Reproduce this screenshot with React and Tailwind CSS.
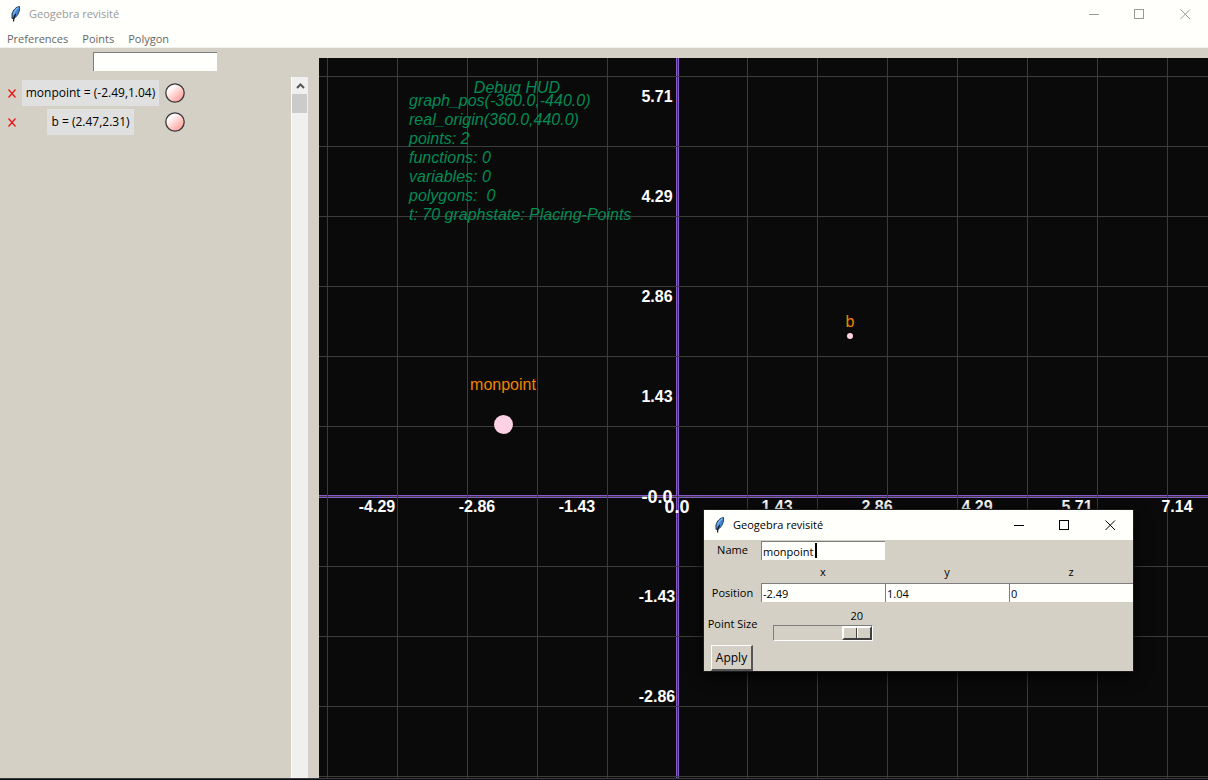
import React, { useState } from "react";

const GRID = 70;
const UNIT = 100;
const ORIGIN = { x: 358, y: 438 };
const range = (n) => Array.from({ length: n }, (_, i) => i);

const xLabels = [
  [-3, "-4.29"], [-2, "-2.86"], [-1, "-1.43"], [1, "1.43"],
  [2, "2.86"], [3, "4.29"], [4, "5.71"], [5, "7.14"],
];
const yLabels = [
  [4, "5.71"], [3, "4.29"], [2, "2.86"], [1, "1.43"], [-1, "-1.43"], [-2, "-2.86"],
];
const hud = [
  "graph_pos(-360.0,-440.0)",
  "real_origin(360.0,440.0)",
  "points: 2",
  "functions: 0",
  "variables: 0",
  "polygons:\u00a0 0",
  "t: 70 graphstate: Placing-Points",
];
const objects = ["monpoint = (-2.49,1.04)", "b = (2.47,2.31)"];

function Feather() {
  return (
    <svg width="16" height="16" viewBox="0 0 16 16" aria-hidden="true">
      <path d="M11.5 .5 C8 1 5 4 4 8 L4 12.500 L6.500 12 C10 9.500 12 5 11.500 .5Z" fill="#3f86d6" stroke="#24364f" strokeWidth="1" />
      <path d="M10.500 1.500 C8 3 6 6 5.500 9" fill="none" stroke="#7db8ef" strokeWidth="1.4" />
      <path d="M7.500 8 C6.200 10.500 5.500 13 5.500 15.500" fill="none" stroke="#111" strokeWidth="1.2" />
    </svg>
  );
}

function WindowButtons({ tone }) {
  return (
    <div className={`flex ${tone}`}>
      <button type="button" aria-label="Minimize" className="flex h-7 w-[46px] items-center justify-center">
        <svg width="11" height="11" shapeRendering="crispEdges"><path d="M0 5.5H10" stroke="currentColor" /></svg>
      </button>
      <button type="button" aria-label="Maximize" className="flex h-7 w-[45px] items-center justify-center">
        <svg width="11" height="11"><rect x=".5" y=".5" width="9" height="9" fill="none" stroke="currentColor" /></svg>
      </button>
      <button type="button" aria-label="Close" className="flex h-7 w-[46px] items-center justify-center">
        <svg width="11" height="11"><path d="M.5 .5L10 10M10 .5L.5 10" stroke="currentColor" /></svg>
      </button>
    </div>
  );
}

function Graph() {
  return (
    <svg className="absolute inset-0 h-full w-full font-['Liberation_Sans',Arial,sans-serif]" fontSize="16">
      <g fill="#8659c9" shapeRendering="crispEdges">
        <rect x={ORIGIN.x - 1} y="0" width="3" height="100%" />
        <rect x="0" y={ORIGIN.y - 1} width="100%" height="3" />
      </g>
      <g fill="#3c3c3c" shapeRendering="crispEdges">
        {range(40).map((i) => <rect key={i} x={8 + i * GRID} y="0" width="1" height="100%" />)}
        {range(30).map((i) => <rect key={i} x="0" y={18 + i * GRID} width="100%" height="1" />)}
      </g>
      <g fill="#fff" fontWeight="bold" textAnchor="middle">
        {xLabels.map(([n, t]) => <text key={t} x={ORIGIN.x + n * UNIT} y={ORIGIN.y + 16}>{t}</text>)}
        {yLabels.map(([n, t]) => <text key={t} x={ORIGIN.x - 20} y={ORIGIN.y - n * UNIT + 6}>{t}</text>)}
        <text x={ORIGIN.x - 20} y={ORIGIN.y + 7} fontSize="18">-0.0</text>
        <text x={ORIGIN.x} y={ORIGIN.y + 17} fontSize="18">0.0</text>
      </g>
      <g fill="#008c56" fontStyle="italic">
        <text x="198" y="35" textAnchor="middle">Debug HUD</text>
        {hud.map((t, i) => <text key={t} x="90" y={48 + i * 19}>{t}</text>)}
      </g>
      <g fill="#f08400" textAnchor="middle">
        <text x="184" y="332">monpoint</text>
        <text x="531" y="269">b</text>
      </g>
      <circle cx="184.5" cy="366.5" r="9.5" fill="#ffd1e5" />
      <circle cx="531" cy="278" r="3" fill="#ffd1e5" />
    </svg>
  );
}

const field =
  "h-[19px] w-full min-w-0 rounded-none border-t border-l border-[#7d7d7d] bg-[#fffffb] px-px outline-none";

function PointDialog() {
  const [size, setSize] = useState(20);
  return (
    <section
      aria-label="Geogebra revisité"
      className="absolute left-[704px] top-[510px] w-[429px] bg-[#d4d0c5] text-[11px] leading-4 text-black shadow-[0_0_0_1px_#1c1c1c,0_4px_14px_#000]"
    >
      <header className="flex h-[30px] items-center justify-between bg-[#fffffb]">
        <div className="flex items-center gap-[5px] pl-2"><Feather /><span>Geogebra revisité</span></div>
        <WindowButtons tone="text-black" />
      </header>
      <form onSubmit={(e) => e.preventDefault()}>
        <div className="grid grid-cols-[57px_repeat(3,1fr)] items-center text-center">
          <label htmlFor="name">Name</label>
          <div className="relative flex pt-px">
            <input id="name" defaultValue="monpoint" className={field} />
            <span aria-hidden="true" className="absolute top-[3px] left-[54px] h-[15px] w-0.5 bg-black" />
          </div>
          <span className="col-span-2" />
          <span />
          <label htmlFor="px" className="h-[23px] pt-1">x</label>
          <label htmlFor="py" className="h-[23px] pt-1">y</label>
          <label htmlFor="pz" className="h-[23px] pt-1">z</label>
          <span>Position</span>
          <input id="px" aria-label="Position x" defaultValue="-2.49" className={field} />
          <input id="py" aria-label="Position y" defaultValue="1.04" className={field} />
          <input id="pz" aria-label="Position z" defaultValue="0" className={field} />
          <label htmlFor="size" className="whitespace-nowrap">Point Size</label>
          <div className="flex flex-col items-end px-3 pt-1.5 pb-1">
            <output htmlFor="size" className="h-[17px] pr-2.5">{size}</output>
            <input
              id="size"
              type="range"
              min="0"
              max="20"
              value={size}
              onChange={(e) => setSize(Number(e.target.value))}
              className="h-4 w-[100px] appearance-none border border-t-[#7d7d7d] border-r-white border-b-white border-l-[#7d7d7d] bg-[#d4d0c5] [&::-webkit-slider-thumb]:h-[14px] [&::-webkit-slider-thumb]:w-[30px] [&::-webkit-slider-thumb]:appearance-none [&::-webkit-slider-thumb]:border-2 [&::-webkit-slider-thumb]:border-t-white [&::-webkit-slider-thumb]:border-r-[#404040] [&::-webkit-slider-thumb]:border-b-[#404040] [&::-webkit-slider-thumb]:border-l-white [&::-webkit-slider-thumb]:bg-[linear-gradient(90deg,#d4d0c5_12px,#404040_12px,#404040_13px,#fff_13px,#fff_14px,#d4d0c5_14px)]"
            />
          </div>
        </div>
        <button type="submit" className="ml-[7px] block h-[26px] w-[42px] border border-r-2 border-b-2 border-t-white border-r-[#555] border-b-[#555] border-l-white text-xs">
          Apply
        </button>
      </form>
    </section>
  );
}

export default function App() {
  return (
    <div className="relative flex min-h-screen flex-col overflow-hidden bg-[#d4d0c5] font-['Open_Sans','Noto_Sans',sans-serif] text-[11px] leading-4">
      <header className="border-b border-[#f0f0ec] bg-[#fffffb]">
        <div className="flex h-7 items-center justify-between">
          <div className="flex items-center gap-[5px] pl-2 text-[#999]"><Feather /><h1>Geogebra revisité</h1></div>
          <WindowButtons tone="text-[#999]" />
        </div>
        <nav className="flex h-[19px] items-center gap-3.5 px-[7px] pt-[3px] text-[#666]">
          <button type="button">Preferences</button>
          <button type="button">Points</button>
          <button type="button">Polygon</button>
        </nav>
      </header>
      <main className="flex flex-1">
        <aside className="flex w-[319px] shrink-0 flex-col pt-1">
          <input aria-label="Expression" className="ml-[93px] h-[19px] w-[124px] rounded-none border-t border-l border-[#7d7d7d] bg-[#fffffb] px-1 outline-none" />
          <div className="mt-1.5 flex flex-1">
            <ul className="flex flex-1 flex-col gap-[3px] pt-[3px]">
              {objects.map((o) => (
                <li key={o} className="grid h-[26px] grid-cols-[21px_139px_29px] items-center">
                  <button type="button" aria-label={`Delete ${o}`} className="flex justify-center pl-0.5">
                    <svg width="8" height="9"><path d="M.5 .5L7.5 8.5M7.5 .5L.5 8.5" stroke="#f01010" strokeWidth="1.2" /></svg>
                  </button>
                  <span className="justify-self-center bg-[#e0e0e0] px-1 py-[5px] text-xs leading-4 whitespace-nowrap">{o}</span>
                  <button type="button" aria-label={`Colour of ${o}`} className="justify-self-center">
                    <svg width="20" height="20" className="block">
                      <defs>
                        <linearGradient id="knob" x1="0.15" y1="0.1" x2="0.85" y2="0.9">
                          <stop offset="0.15" stopColor="#fff" />
                          <stop offset="1" stopColor="#ff9c98" />
                        </linearGradient>
                      </defs>
                      <circle cx="10" cy="10" r="9.2" fill="url(#knob)" stroke="#383838" strokeWidth="1.3" />
                    </svg>
                  </button>
                </li>
              ))}
            </ul>
            <div className="mr-[11px] w-[17px] border-l border-white bg-[#f0f0ee]">
              <button type="button" aria-label="Scroll up" className="flex h-[17px] w-full items-center justify-center">
                <svg width="9" height="6"><path d="M1 5L4.500 1.500L8 5" fill="none" stroke="#555" strokeWidth="2" /></svg>
              </button>
              <div className="mr-px h-[19px] bg-[#cbcbcb]" />
            </div>
          </div>
        </aside>
        <div className="relative mt-[10px] flex-1 overflow-hidden bg-[#0a0a0a]">
          <Graph />
        </div>
      </main>
      <footer className="h-0.5 border-t border-[#3a3a3a] bg-[#0c0e16]" />
      <PointDialog />
    </div>
  );
}
